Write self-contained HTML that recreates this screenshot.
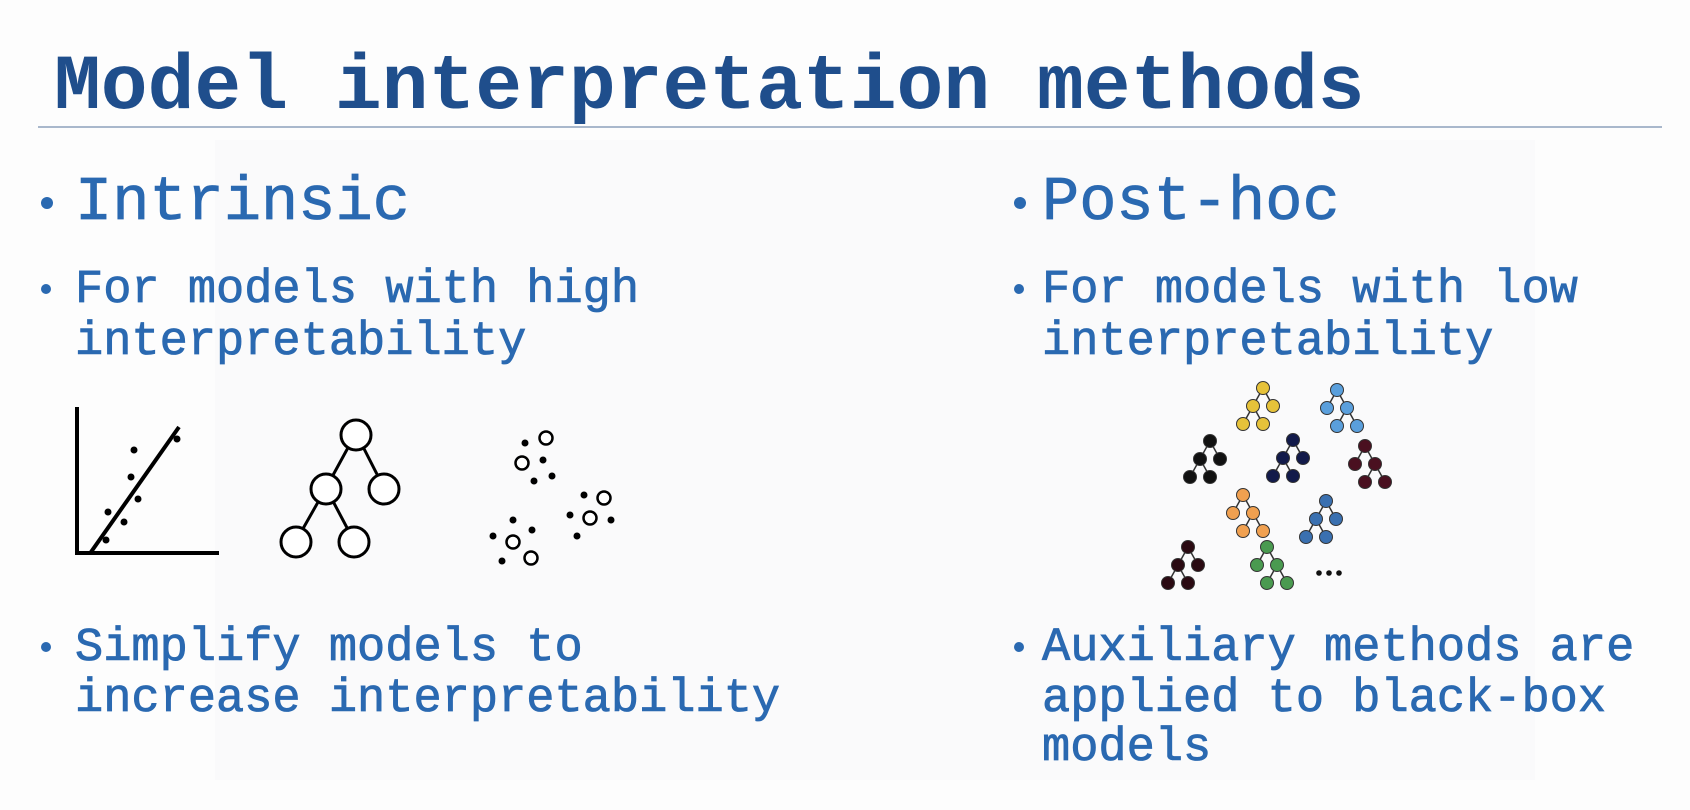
<!DOCTYPE html>
<html><head><meta charset="utf-8"><style>
html,body{margin:0;padding:0;background:#fff;width:1690px;height:810px;overflow:hidden}
svg{display:block}
text{font-family:"Liberation Mono",monospace}
</style></head><body>
<svg width="1690" height="810" viewBox="0 0 1690 810">
<rect width="1690" height="810" fill="#fdfdfd"/>
<rect x="215" y="140" width="1320" height="640" fill="#fafafb"/>
<text x="54" y="108" font-size="78" font-weight="bold" fill="#1f4e8c">Model interpretation methods</text>
<rect x="38" y="126" width="1624" height="2" fill="#a9b8cc"/>
<g fill="#2a69b1">
<circle cx="47" cy="203" r="6"/><circle cx="1020" cy="203" r="6"/>
<circle cx="46" cy="289" r="5"/><circle cx="1019" cy="289" r="5"/>
<circle cx="46" cy="647" r="5"/><circle cx="1019" cy="647" r="5"/>
<g stroke="#2a69b1" stroke-width="0.8">
<text x="75" y="219" font-size="62">Intrinsic</text>
<text x="1042" y="219" font-size="62">Post-hoc</text>
<g font-size="47">
<text x="75" y="302">For models with high</text>
<text x="75" y="354">interpretability</text>
<text x="1042" y="302">For models with low</text>
<text x="1042" y="354">interpretability</text>
<text x="75" y="660">Simplify models to</text>
<text x="75" y="711">increase interpretability</text>
<text x="1042" y="660">Auxiliary methods are</text>
<text x="1042" y="711">applied to black-box</text>
<text x="1042" y="760">models</text>
</g></g></g>
<!-- scatter -->
<g stroke="#000" fill="none" stroke-width="4">
<path d="M77 407 V553 H219"/>
<path d="M91 552 L179 427"/>
</g>
<g fill="#000">
<circle cx="134" cy="450" r="3.5"/><circle cx="131" cy="477" r="3.5"/><circle cx="138" cy="499" r="3.5"/>
<circle cx="108" cy="512" r="3.5"/><circle cx="124" cy="522" r="3.5"/><circle cx="106" cy="540" r="3.5"/><circle cx="177" cy="439" r="3.5"/>
</g>
<!-- tree -->
<g stroke="#000" stroke-width="3" fill="#fff">
<path d="M356 433 L326 488 M356 433 L384 488 M326 488 L296 541 M326 488 L354 541"/>
<circle cx="356" cy="435" r="15"/><circle cx="326" cy="489" r="15"/><circle cx="384" cy="489" r="15"/>
<circle cx="296" cy="542" r="15"/><circle cx="354" cy="542" r="15"/>
</g>
<!-- clusters -->
<g stroke="#000" stroke-width="2.5" fill="#fff">
<circle cx="546" cy="438" r="6.5"/><circle cx="522" cy="463" r="6.5"/><circle cx="604" cy="498" r="6.5"/>
<circle cx="590" cy="518" r="6.5"/><circle cx="513" cy="542" r="6.5"/><circle cx="531" cy="558" r="6.5"/>
</g>
<g fill="#000">
<circle cx="525" cy="443" r="3.5"/><circle cx="543" cy="460" r="3.5"/><circle cx="552" cy="476" r="3.5"/><circle cx="534" cy="481" r="3.5"/>
<circle cx="584" cy="495" r="3.5"/><circle cx="570" cy="515" r="3.5"/><circle cx="611" cy="520" r="3.5"/><circle cx="577" cy="536" r="3.5"/>
<circle cx="513" cy="520" r="3.5"/><circle cx="532" cy="530" r="3.5"/><circle cx="493" cy="536" r="3.5"/><circle cx="502" cy="561" r="3.5"/>
</g>
<!-- mini trees -->
<defs>
<g id="tl"><path d="M0 0 L-10 18 M0 0 L10 18 M-10 18 L-20 36 M-10 18 L0 36" stroke="#333" stroke-width="1.5"/>
<circle cx="0" cy="0" r="6.5"/><circle cx="-10" cy="18" r="6.5"/><circle cx="10" cy="18" r="6.5"/><circle cx="-20" cy="36" r="6.5"/><circle cx="0" cy="36" r="6.5"/></g>
<g id="tr"><path d="M0 0 L-10 18 M0 0 L10 18 M10 18 L0 36 M10 18 L20 36" stroke="#333" stroke-width="1.5"/>
<circle cx="0" cy="0" r="6.5"/><circle cx="-10" cy="18" r="6.5"/><circle cx="10" cy="18" r="6.5"/><circle cx="0" cy="36" r="6.5"/><circle cx="20" cy="36" r="6.5"/></g>
</defs>
<g stroke="#333" stroke-width="1">
<use href="#tl" x="1263" y="388" fill="#e6c23a"/>
<use href="#tr" x="1337" y="390" fill="#5a9fdc"/>
<use href="#tl" x="1210" y="441" fill="#111"/>
<use href="#tl" x="1293" y="440" fill="#121a4a"/>
<use href="#tr" x="1365" y="446" fill="#4a1020"/>
<use href="#tr" x="1243" y="495" fill="#f0a050"/>
<use href="#tl" x="1326" y="501" fill="#3a70b0"/>
<use href="#tl" x="1188" y="547" fill="#2a0a12"/>
<use href="#tr" x="1267" y="547" fill="#4a9a50"/>
</g>
<g fill="#111"><circle cx="1319" cy="573" r="2.8"/><circle cx="1329" cy="573" r="2.8"/><circle cx="1339" cy="573" r="2.8"/></g>
</svg>
</body></html>
